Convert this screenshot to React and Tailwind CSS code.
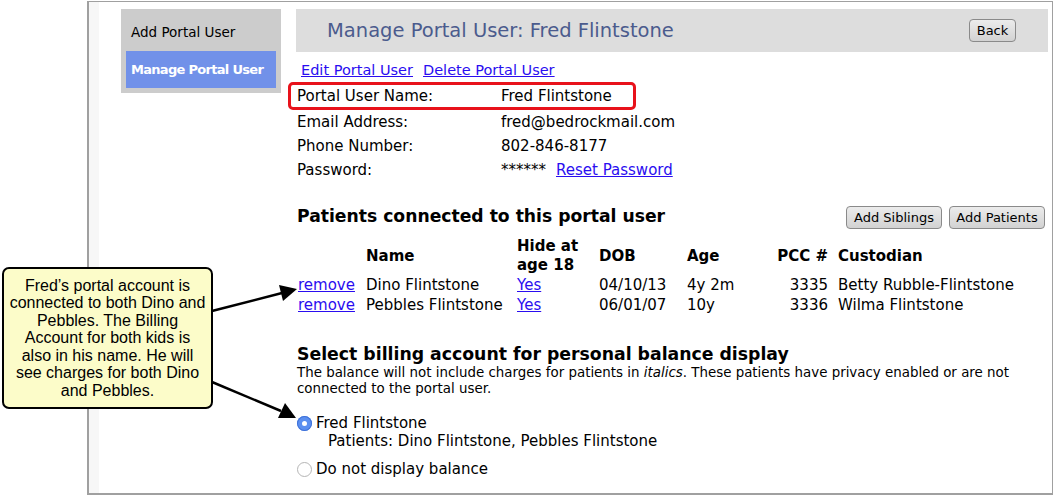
const FONT = 'font-["DejaVu_Sans","Liberation_Sans",sans-serif]'

const INFO = [
  { label: 'Email Address:', value: 'fred@bedrockmail.com' },
  { label: 'Phone Number:', value: '802-846-8177' },
]

const PATIENTS = [
  { name: 'Dino Flintstone', dob: '04/10/13', age: '4y 2m', pcc: '3335', custodian: 'Betty Rubble-Flintstone' },
  { name: 'Pebbles Flintstone', dob: '06/01/07', age: '10y', pcc: '3336', custodian: 'Wilma Flintstone' },
]

function Btn({ children, className = '' }) {
  return (
    <button
      className={`h-[23px] rounded-[4px] border border-[#8a8a8a] bg-gradient-to-b from-[#ececec] to-[#d2d2d2] text-[13px] text-black leading-none ${className}`}
    >
      {children}
    </button>
  )
}

function Radio({ checked }) {
  if (checked) {
    return (
      <span className="flex h-[15px] w-[15px] items-center justify-center rounded-full bg-[#5b8ff0] shadow-[inset_0_0_0_1px_#3f72d8]">
        <span className="h-[5px] w-[5px] rounded-full bg-white" />
      </span>
    )
  }
  return <span className="h-[15px] w-[15px] rounded-full border border-[#b5b5b5] bg-white" />
}

function Callout() {
  return (
    <div className="absolute left-[2px] top-[267px] flex h-[142px] w-[211px] items-center justify-center rounded-[7px] border-2 border-black bg-[#fcfcc9] text-center font-['Liberation_Sans',Arial,sans-serif] text-[16px] leading-[17.5px] text-black">
      <p className="whitespace-nowrap">
        Fred’s portal account is<br />
        connected to both Dino and<br />
        Pebbles. The Billing<br />
        Account for both kids is<br />
        also in his name. He will<br />
        see charges for both Dino<br />
        and Pebbles.
      </p>
    </div>
  )
}

function Arrows() {
  return (
    <svg className="pointer-events-none absolute left-0 top-0" width="1053" height="495">
      <line x1="212" y1="311" x2="282" y2="293" stroke="black" strokeWidth="2.5" />
      <polygon points="297,289 279,285 283,301" fill="black" />
      <line x1="212" y1="382" x2="281" y2="411" stroke="black" strokeWidth="2.5" />
      <polygon points="296,418 285,403 278,418" fill="black" />
    </svg>
  )
}

export default function App() {
  return (
    <div className={`relative h-[495px] w-[1053px] overflow-hidden bg-white text-black ${FONT}`}>
      <div className="ml-[87px] mt-[1px] flex h-[494px] w-[966px] border-b-2 border-l-2 border-r border-t border-[#a0a0a0]">
        <div className="w-[10px] bg-[#f7f7f7]" />

        {/* Sidebar */}
        <div className="ml-[22px] mt-[7px] h-[84px] w-[160px] shrink-0 bg-[#cccccc] p-[5px]">
          <div className="flex h-[37px] items-center pl-[5px] text-[13.5px]">Add Portal User</div>
          <div className="flex h-[37px] items-center whitespace-nowrap bg-[#7191e9] pl-[5px] text-[13px] font-bold tracking-[-0.7px] text-white">
            Manage Portal User
          </div>
        </div>

        {/* Main */}
        <div className="ml-[15px] mr-[4px] flex-1">
          <div className="mt-[7px] flex h-[43px] items-center justify-between bg-[#dddddd] pl-[31px] pr-[32px]">
            <h1 className="text-[19.5px] text-[#4b5b8d]">Manage Portal User: Fred Flintstone</h1>
            <Btn className="w-[47px]">Back</Btn>
          </div>

          <div className="mt-[8px] flex h-[22px] items-center gap-[10px] pl-[5px] text-[14.5px] text-[#2a0df0]">
            <a className="underline">Edit Portal User</a>
            <a className="underline">Delete Portal User</a>
          </div>

          <div className="-ml-[8px] flex h-[28px] w-[348px] items-center rounded-[5px] border-[3px] border-[#e8121b] pl-[6px] text-[15px]">
            <span className="w-[204px]">Portal User Name:</span>
            <span>Fred Flintstone</span>
          </div>
          {INFO.map(row => (
            <div key={row.label} className="flex h-[24px] items-center pl-[1px] text-[15px]">
              <span className="w-[204px]">{row.label}</span>
              <span>{row.value}</span>
            </div>
          ))}
          <div className="flex h-[25px] items-center pl-[1px] text-[15px]">
            <span className="w-[204px]">Password:</span>
            <span>******</span>
            <a className="ml-[10px] text-[#2a0df0] underline">Reset Password</a>
          </div>

          <div className="mt-[19px] flex h-[30px] items-center justify-between pl-[1px]">
            <h2 className="text-[17.2px] font-bold">Patients connected to this portal user</h2>
            <div className="mr-[3px] flex gap-[7px]">
              <Btn className="w-[96px]">Add Siblings</Btn>
              <Btn className="w-[96px]">Add Patients</Btn>
            </div>
          </div>

          <div className="ml-[2px] mt-[5px] grid grid-cols-[68px_151px_82px_88px_70px_71px_1fr] whitespace-nowrap text-[15px] leading-[20px]">
            <div className="h-[38px]" />
            <div className="flex items-center font-bold">Name</div>
            <div className="flex items-center font-bold leading-[19px]">Hide at<br />age 18</div>
            <div className="flex items-center font-bold">DOB</div>
            <div className="flex items-center font-bold">Age</div>
            <div className="flex items-center justify-end font-bold">PCC #</div>
            <div className="flex items-center pl-[10px] font-bold">Custodian</div>
            {PATIENTS.map(p => (
              <div key={p.name} className="contents">
                <a className="flex h-[20px] items-center text-[#2a0df0] underline">remove</a>
                <div className="flex h-[20px] items-center">{p.name}</div>
                <a className="flex h-[20px] items-center text-[#2a0df0] underline">Yes</a>
                <div className="flex h-[20px] items-center">{p.dob}</div>
                <div className="flex h-[20px] items-center">{p.age}</div>
                <div className="flex h-[20px] items-center justify-end">{p.pcc}</div>
                <div className="flex h-[20px] items-center pl-[10px]">{p.custodian}</div>
              </div>
            ))}
          </div>

          <div className="mt-[28px] pl-[1px]">
            <h2 className="h-[22px] whitespace-nowrap text-[17.3px] font-bold leading-[22px]">Select billing account for personal balance display</h2>
            <p className="w-[740px] text-[13.4px] leading-[16px]">
              The balance will not include charges for patients in <i>italics</i>. These patients have privacy enabled or are not connected to the portal user.
            </p>
            <div className="mt-[15px] flex h-[22px] items-center gap-[4px] text-[15px]">
              <Radio checked />
              <span>Fred Flintstone</span>
            </div>
            <div className="-mt-[1px] h-[17px] pl-[31px] text-[15px] leading-[16px]">Patients: Dino Flintstone, Pebbles Flintstone</div>
            <div className="mt-[8px] flex h-[22px] items-center gap-[4px] text-[15px]">
              <Radio />
              <span>Do not display balance</span>
            </div>
          </div>
        </div>
      </div>

      <Callout />
      <Arrows />
    </div>
  )
}
